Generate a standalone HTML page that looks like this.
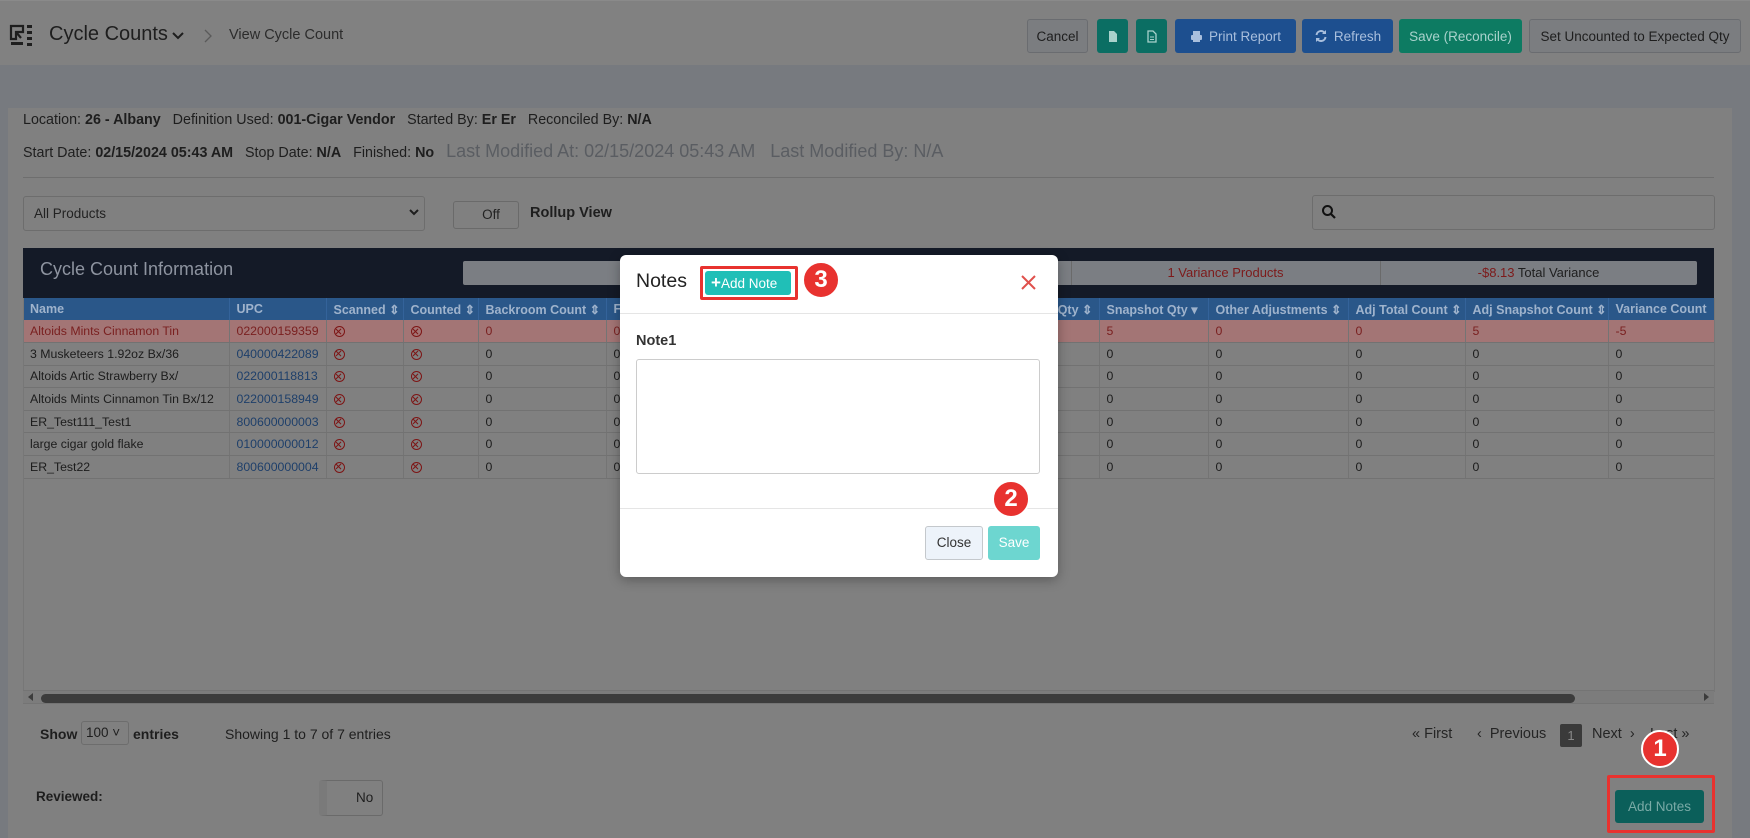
<!DOCTYPE html>
<html><head><meta charset="utf-8"><style>
*{box-sizing:border-box;margin:0;padding:0}
body{width:1750px;height:835px;overflow:hidden;background:#777a7f;font-family:"Liberation Sans",sans-serif;position:relative;color:#1c1c1c}
.a{position:absolute}
.btn{position:absolute;top:19px;height:34px;border-radius:3px;font-size:13.5px;display:flex;align-items:center;justify-content:center;gap:6px}
.g{background:#0b6e63;color:#a9d2cc}
.b{background:#1d4f8f;color:#a9bfdd}
.gr{background:#7b7d80;border:1px solid #6a6c70;color:#1e1e1e}
table{border-collapse:collapse;table-layout:fixed}
th{background:#2a5789;color:#9fb3cc;font-size:12.5px;text-align:left;padding-left:7px;height:22px;font-weight:bold;white-space:nowrap;overflow:hidden;border-right:1px solid #34639a}
td{font-size:12.3px;height:22.6px;padding-left:7px;white-space:nowrap;overflow:hidden;border-bottom:1px solid #727272;border-right:1px solid #747474;color:#1c1c1c}
td.u{color:#1e3f6a}
tr.r td{background:#a37575;color:#7a2020}
tr.r td.u{color:#7a2020}
.x{display:inline-block;width:11px;height:11px;border:1.5px solid #7d1515;border-radius:50%;position:relative;top:2px}
.x:before,.x:after{content:"";position:absolute;left:3.2px;top:0.5px;width:1.4px;height:7px;background:#7d1515;transform:rotate(45deg)}
.x:after{transform:rotate(-45deg)}
.circ{position:absolute;width:38px;height:38px;border-radius:50%;background:#e8322f;color:#fff;font-size:24px;font-weight:bold;display:flex;align-items:center;justify-content:center;border:2px solid #fff}
.pg{position:absolute;top:726px;font-size:14.5px;color:#252525;white-space:nowrap}
</style></head><body>
<div class="a" style="left:0;top:0;width:1750px;height:65px;background:#818181;border-top:1px solid #8a8a8a"></div>
<svg class="a" style="left:9px;top:22px" width="26" height="26" viewBox="0 0 26 26"><path d="M2 4h12v6H7v7H2z M7 10l5 6" fill="none" stroke="#1e1e1e" stroke-width="2.2"/><rect x="18" y="3" width="5" height="3" fill="#1e1e1e"/><rect x="18" y="9" width="5" height="3" fill="#1e1e1e"/><rect x="18" y="15" width="5" height="3" fill="#1e1e1e"/><rect x="18" y="21" width="5" height="3" fill="#1e1e1e"/><rect x="2" y="20" width="12" height="3" fill="#1e1e1e"/></svg>
<div class="a" style="left:49px;top:23px;font-size:20px;color:#1e1e1e">Cycle Counts</div>
<svg class="a" style="left:171px;top:31px" width="14" height="10"><path d="M2 2l5 5 5-5" fill="none" stroke="#1e1e1e" stroke-width="2"/></svg>
<svg class="a" style="left:203px;top:29px" width="10" height="14"><path d="M2 1l6 6-6 6" fill="none" stroke="#5a5a5a" stroke-width="1.3"/></svg>
<div class="a" style="left:229px;top:27px;font-size:14.5px;color:#2c2c2c">View Cycle Count</div>
<div class="btn gr" style="left:1027px;width:61px">Cancel</div>
<div class="btn g" style="left:1097px;width:31px"><svg width="10" height="13"><path d="M1 1h5l3 3v8H1z" fill="#a9d2cc"/></svg></div>
<div class="btn g" style="left:1136px;width:31px"><svg width="10" height="13"><path d="M1 1h5l3 3v8H1z" fill="none" stroke="#a9d2cc" stroke-width="1.3"/><path d="M3 7h4M3 9.5h4" stroke="#a9d2cc"/></svg></div>
<div class="btn b" style="left:1175px;width:121px"><svg width="13" height="13"><rect x="3" y="1" width="7" height="4" fill="#a9bfdd"/><rect x="1" y="5" width="11" height="5" rx="1" fill="#a9bfdd"/><rect x="3" y="9" width="7" height="3" fill="#a9bfdd"/></svg>Print Report</div>
<div class="btn b" style="left:1302px;width:91px"><svg width="14" height="14"><path d="M2.5 6A4.5 4.5 0 0 1 11 4.5M11.5 8A4.5 4.5 0 0 1 3 9.5" fill="none" stroke="#a9bfdd" stroke-width="2"/><path d="M12 1v4H8zM2 13V9h4z" fill="#a9bfdd"/></svg>Refresh</div>
<div class="btn g" style="left:1399px;width:123px;background:#0d7b62">Save (Reconcile)</div>
<div class="btn gr" style="left:1529px;width:212px">Set Uncounted to Expected Qty</div>

<div class="a" style="left:8px;top:108px;width:1724px;height:730px;background:#808080"></div>
<div class="a" style="left:23px;top:112px;font-size:14.3px;color:#1e1e1e;white-space:nowrap">Location: <b>26 - Albany</b>&nbsp;&nbsp;&nbsp;Definition Used: <b>001-Cigar Vendor</b>&nbsp;&nbsp;&nbsp;Started By: <b>Er Er</b>&nbsp;&nbsp;&nbsp;Reconciled By: <b>N/A</b></div>
<div class="a" style="left:23px;top:141px;font-size:14.3px;color:#1e1e1e;white-space:nowrap">Start Date: <b>02/15/2024 05:43 AM</b>&nbsp;&nbsp;&nbsp;Stop Date: <b>N/A</b>&nbsp;&nbsp;&nbsp;Finished: <b>No</b>&nbsp;&nbsp;&nbsp;<span style="font-size:18px;color:#5a5d62">Last Modified At: 02/15/2024 05:43 AM&nbsp;&nbsp;&nbsp;Last Modified By: N/A</span></div>
<div class="a" style="left:23px;top:177px;width:1691px;height:1px;background:#6e6e6e"></div>
<div class="a" style="left:23px;top:196px;width:402px;height:35px;border:1px solid #6d6d6d;border-radius:3px;font-size:13.5px;padding:9px 10px;color:#222">All Products</div>
<svg class="a" style="left:409px;top:209px" width="10" height="8"><path d="M1 1l4 4 4-4" fill="none" stroke="#1e1e1e" stroke-width="2"/></svg>
<div class="a" style="left:453px;top:201px;width:66px;height:28px;border:1px solid #6a6a6a;border-radius:3px;font-size:13.5px;text-align:center;line-height:26px;color:#222;padding-left:10px">Off</div>
<div class="a" style="left:530px;top:205px;font-size:14.5px;font-weight:bold;color:#1e1e1e">Rollup View</div>
<div class="a" style="left:1312px;top:195px;width:403px;height:35px;border:1px solid #6d6d6d;border-radius:3px"></div>
<svg class="a" style="left:1321px;top:204px" width="16" height="16"><circle cx="6.5" cy="6.5" r="4.5" fill="none" stroke="#111" stroke-width="2"/><path d="M10 10l4 4" stroke="#111" stroke-width="2.2"/></svg>

<div class="a" style="left:23px;top:248px;width:1691px;height:50px;background:#141a27"></div>
<div class="a" style="left:40px;top:259px;font-size:18px;color:#8e94a0">Cycle Count Information</div>
<div class="a" style="left:463px;top:261px;width:1234px;height:24px;background:#7b7e83;border-radius:2px"></div>
<div class="a" style="left:463px;top:261px;width:608px;height:24px;font-size:13px;line-height:24px;text-align:center;color:#1e1e1e">7 Total Products</div>
<div class="a" style="left:1071px;top:261px;width:1px;height:24px;background:#6a6a6a"></div>
<div class="a" style="left:1071px;top:261px;width:309px;height:24px;font-size:13px;line-height:24px;text-align:center;color:#7d1a1a">1 Variance Products</div>
<div class="a" style="left:1380px;top:261px;width:1px;height:24px;background:#6a6a6a"></div>
<div class="a" style="left:1380px;top:261px;width:317px;height:24px;font-size:13px;line-height:24px;text-align:center;color:#1e1e1e"><span style="color:#7d1a1a">-$8.13</span> Total Variance</div>

<table class="a" style="left:23px;top:298px;width:1691px">
<colgroup><col style="width:206px"><col style="width:97px"><col style="width:77px"><col style="width:75px"><col style="width:128px"><col style="width:150px"><col style="width:150px"><col style="width:193px"><col style="width:109px"><col style="width:140px"><col style="width:117px"><col style="width:143px"><col style="width:106px"></colgroup>
<tr><th>Name</th><th>UPC</th><th>Scanned ⇕</th><th>Counted ⇕</th><th>Backroom Count ⇕</th><th>Floor Count</th><th>Total</th><th style="text-align:right;padding-right:6px">Expected Qty ⇕</th><th>Snapshot Qty ▾</th><th>Other Adjustments ⇕</th><th>Adj Total Count ⇕</th><th>Adj Snapshot Count ⇕</th><th>Variance Count</th></tr>
<tr class="r"><td>Altoids Mints Cinnamon Tin</td><td class="u">022000159359</td><td><i class="x"></i></td><td><i class="x"></i></td><td>0</td><td>0</td><td>0</td><td>5</td><td>5</td><td>0</td><td>0</td><td>5</td><td>-5</td></tr>
<tr><td>3 Musketeers 1.92oz Bx/36</td><td class="u">040000422089</td><td><i class="x"></i></td><td><i class="x"></i></td><td>0</td><td>0</td><td>0</td><td>0</td><td>0</td><td>0</td><td>0</td><td>0</td><td>0</td></tr>
<tr><td>Altoids Artic Strawberry Bx/</td><td class="u">022000118813</td><td><i class="x"></i></td><td><i class="x"></i></td><td>0</td><td>0</td><td>0</td><td>0</td><td>0</td><td>0</td><td>0</td><td>0</td><td>0</td></tr>
<tr><td>Altoids Mints Cinnamon Tin Bx/12</td><td class="u">022000158949</td><td><i class="x"></i></td><td><i class="x"></i></td><td>0</td><td>0</td><td>0</td><td>0</td><td>0</td><td>0</td><td>0</td><td>0</td><td>0</td></tr>
<tr><td>ER_Test111_Test1</td><td class="u">800600000003</td><td><i class="x"></i></td><td><i class="x"></i></td><td>0</td><td>0</td><td>0</td><td>0</td><td>0</td><td>0</td><td>0</td><td>0</td><td>0</td></tr>
<tr><td>large cigar gold flake</td><td class="u">010000000012</td><td><i class="x"></i></td><td><i class="x"></i></td><td>0</td><td>0</td><td>0</td><td>0</td><td>0</td><td>0</td><td>0</td><td>0</td><td>0</td></tr>
<tr><td>ER_Test22</td><td class="u">800600000004</td><td><i class="x"></i></td><td><i class="x"></i></td><td>0</td><td>0</td><td>0</td><td>0</td><td>0</td><td>0</td><td>0</td><td>0</td><td>0</td></tr>
</table>
<div class="a" style="left:23px;top:298px;width:1px;height:394px;background:#777"></div>
<div class="a" style="left:1714px;top:298px;width:1px;height:394px;background:#777"></div>
<div class="a" style="left:23px;top:690px;width:1691px;height:14px;background:#7c7c7c;border-top:1px solid #747474;border-bottom:1px solid #747474"></div>
<div class="a" style="left:28px;top:693px;width:0;height:0;border:4px solid transparent;border-right:5px solid #3c3c3c;border-left:0"></div>
<div class="a" style="left:41px;top:694px;width:1534px;height:9px;background:#3c3c3c;border-radius:5px"></div>
<div class="a" style="left:1704px;top:693px;width:0;height:0;border:4px solid transparent;border-left:5px solid #3c3c3c;border-right:0"></div>

<div class="a" style="left:40px;top:726px;font-size:14px;font-weight:bold;color:#1e1e1e">Show</div>
<div class="a" style="left:81px;top:721px;width:48px;height:24px;border:1px solid #6d6d6d;border-radius:3px;font-size:13.5px;padding:3px 4px;color:#1e1e1e">100 ˅</div>
<div class="a" style="left:133px;top:726px;font-size:14px;font-weight:bold;color:#1e1e1e">entries</div>
<div class="a" style="left:225px;top:726px;font-size:14px;color:#1e1e1e">Showing 1 to 7 of 7 entries</div>
<div class="pg" style="left:1412px">« First</div>
<div class="pg" style="left:1477px">‹&nbsp; Previous</div>
<div class="a" style="left:1560px;top:724px;width:22px;height:23px;background:#3a3a3a;border-radius:2px;color:#888;font-size:13px;text-align:center;line-height:23px">1</div>
<div class="pg" style="left:1592px">Next&nbsp; ›</div>
<div class="pg" style="left:1650px">Last »</div>
<div class="a" style="left:36px;top:789px;font-size:13.5px;font-weight:bold;color:#1e1e1e">Reviewed:</div>
<div class="a" style="left:319px;top:780px;width:64px;height:36px;border:1px solid #6a6a6a;border-radius:3px;font-size:13.5px;color:#1e1e1e;line-height:34px;padding-left:29px;border-left:8px solid #7a7a7a">No</div>
<div class="a" style="left:1615px;top:790px;width:89px;height:33px;background:#0b5f5a;border-radius:3px;color:#79aaa6;font-size:13.5px;text-align:center;line-height:33px">Add Notes</div>
<div class="a" style="left:1607px;top:775px;width:108px;height:58px;border:3px solid #e8322f;border-radius:2px"></div>
<div class="circ" style="left:1641px;top:730px">1</div>

<div class="a" style="left:620px;top:255px;width:438px;height:322px;background:#fff;border-radius:6px;box-shadow:0 3px 12px rgba(0,0,0,.3)"></div>
<div class="a" style="left:636px;top:270px;font-size:19.5px;color:#222">Notes</div>
<div class="a" style="left:705px;top:271px;width:86px;height:24px;background:#20bfb7;border-radius:3px;color:#fff;font-size:13.5px;line-height:24px;padding-left:6px;white-space:nowrap"><b style="font-size:17px">+</b>Add Note</div>
<div class="a" style="left:700px;top:266px;width:98px;height:34px;border:3px solid #e8322f;border-radius:2px"></div>
<div class="circ" style="left:802px;top:261px">3</div>
<svg class="a" style="left:1020px;top:274px" width="17" height="17"><path d="M2 2l13 13M15 2L2 15" stroke="#e0504c" stroke-width="2"/></svg>
<div class="a" style="left:620px;top:313px;width:438px;height:1px;background:#e5e5e5"></div>
<div class="a" style="left:636px;top:333px;font-size:14.5px;font-weight:bold;color:#333">Note1</div>
<div class="a" style="left:636px;top:359px;width:404px;height:115px;border:1px solid #ccc;border-radius:3px"></div>
<div class="a" style="left:620px;top:508px;width:438px;height:1px;background:#e5e5e5"></div>
<div class="a" style="left:925px;top:526px;width:58px;height:34px;background:#edf3fa;border:1px solid #c4c8cc;border-radius:3px;font-size:13.5px;color:#333;text-align:center;line-height:32px">Close</div>
<div class="a" style="left:988px;top:526px;width:52px;height:34px;background:#6dd6d0;border-radius:3px;font-size:13.5px;color:#fff;text-align:center;line-height:34px">Save</div>
<div class="circ" style="left:992px;top:480px">2</div>
</body></html>
